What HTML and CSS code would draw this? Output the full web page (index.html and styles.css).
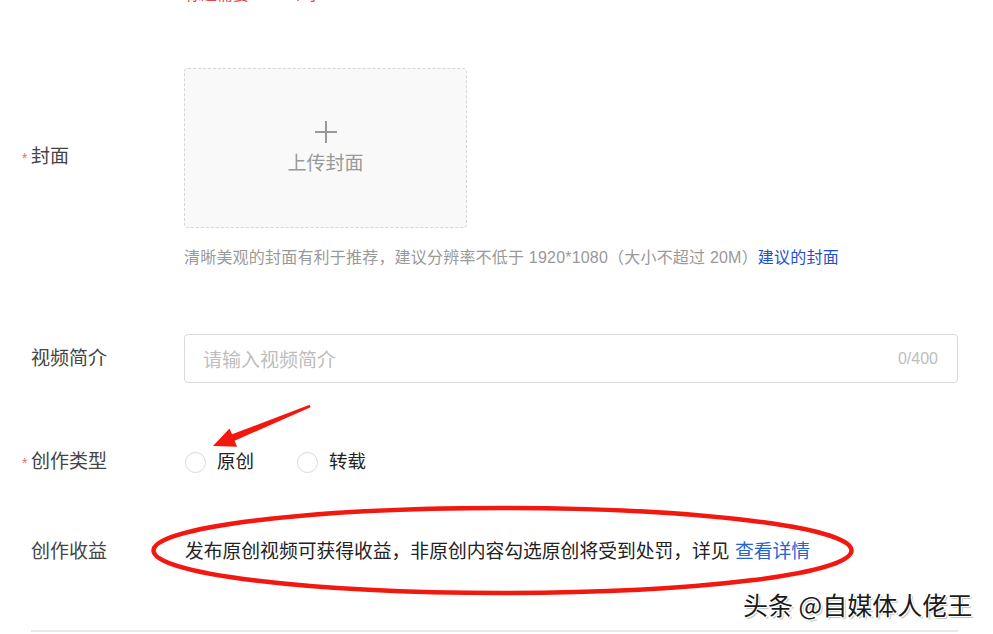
FILE: index.html
```html
<!DOCTYPE html>
<html lang="zh-CN">
<head>
<meta charset="utf-8">
<title>发布视频</title>
<link rel="stylesheet" href="styles.css">
</head>
<body>
<div class="page">
  <form class="form">
    <div class="row row-error">
      <div class="label"></div>
      <div class="content"><div class="error-text">标题需要 5-30 个字</div></div>
    </div>

    <div class="row row-cover">
      <div class="label label-top"><span class="req">*</span>封面</div>
      <div class="content">
        <div class="upload">
          <svg class="plus" width="24" height="24" viewBox="0 0 24 24"><path d="M12 1v22M1 12h22" stroke="#999" stroke-width="2" fill="none"/></svg>
          <span class="upload-text">上传封面</span>
        </div>
        <div class="hint">清晰美观的封面有利于推荐，建议分辨率不低于 1920*1080（大小不超过 20M）<a class="link">建议的封面</a></div>
      </div>
    </div>

    <div class="row row-intro">
      <div class="label"><span class="req blank"></span>视频简介</div>
      <div class="content">
        <div class="input">
          <span class="placeholder">请输入视频简介</span>
          <span class="count">0/400</span>
        </div>
      </div>
    </div>

    <div class="row row-type">
      <div class="label"><span class="req">*</span>创作类型</div>
      <div class="content radios">
        <label class="radio"><span class="circle"></span><span class="radio-text">原创</span></label>
        <label class="radio"><span class="circle"></span><span class="radio-text">转载</span></label>
      </div>
    </div>

    <div class="row row-income">
      <div class="label"><span class="req blank"></span>创作收益</div>
      <div class="content income">发布原创视频可获得收益，非原创内容勾选原创将受到处罚，详见 <a class="link link-dark">查看详情</a></div>
    </div>

    <div class="divider"></div>
  </form>

  <svg class="annot" width="993" height="634" viewBox="0 0 993 634">
    <polygon points="213,446 229.5,428.4 232,434.3 309.6,404.8 310.6,407.2 234.6,440.8 237.1,446.8" fill="#f2180f"/>
    <ellipse cx="502.5" cy="550.5" rx="349" ry="42.5" fill="none" stroke="#f2180f" stroke-width="4.5"/>
  </svg>

  <div class="watermark">头条 @自媒体人佬王</div>
</div>
</body>
</html>
```

FILE: styles.css
```css
* {
  box-sizing: border-box;
}

html, body {
  margin: 0;
  padding: 0;
  background: #fff;
}

body {
  font-family: "Liberation Sans", "Noto Sans CJK SC", sans-serif;
  color: #222;
  width: 993px;
  height: 634px;
  overflow: hidden;
}

.page {
  position: relative;
  width: 993px;
  height: 634px;
  overflow: hidden;
}

.form {
  padding-right: 35px;
  display: flex;
  flex-direction: column;
}

.row {
  display: flex;
  align-items: center;
}

.label {
  width: 184px;
  flex: none;
  padding-left: 22px;
  font-size: 19px;
  line-height: 26px;
  color: #444;
  display: flex;
  align-items: center;
}

.req {
  display: inline-block;
  width: 9px;
  font-size: 14px;
  color: #f46a6a;
  line-height: 14px;
  padding-top: 2px;
}

.req.blank {
  height: 1px;
}

.content {
  flex: 1;
  min-width: 0;
}

/* error line, mostly scrolled off top */
.row-error {
  margin-top: -13px;
  height: 16px;
  overflow: hidden;
}

.error-text {
  font-size: 16px;
  line-height: 16px;
  color: #f04040;
  padding-left: 1px;
}

/* cover */
.row-cover {
  margin-top: 65px;
  align-items: flex-start;
}

.label-top {
  margin-top: 76px;
}

.upload {
  width: 283px;
  height: 160px;
  border: 1px dashed #d6d6d6;
  border-radius: 4px;
  background: #f9f9f9;
  display: flex;
  flex-direction: column;
  align-items: center;
  padding-top: 51px;
}

.plus {
  display: block;
}

.upload-text {
  margin-top: 7px;
  font-size: 19px;
  line-height: 26px;
  color: #999;
}

.hint {
  margin-top: 19px;
  font-size: 16px;
  letter-spacing: 0.2px;
  line-height: 22px;
  color: #999;
  white-space: nowrap;
}

.link {
  color: #1f4fd0;
  text-decoration: none;
  cursor: pointer;
}

.link-dark {
  color: #2463d6;
}

/* intro */
.row-intro {
  margin-top: 65px;
}

.input {
  height: 49px;
  border: 1px solid #d9d9d9;
  border-radius: 4px;
  display: flex;
  align-items: center;
  justify-content: space-between;
  padding: 0 19px 0 18px;
}

.placeholder {
  font-size: 19px;
  color: #bdbdbd;
}

.count {
  font-size: 16px;
  color: #bdbdbd;
}

/* type */
.row-type {
  margin-top: 66px;
}

.radios {
  display: flex;
  align-items: center;
  gap: 42px;
}

.radio {
  display: flex;
  align-items: center;
  gap: 11px;
}

.circle {
  width: 21px;
  height: 21px;
  border: 1px solid #d9d9d9;
  border-radius: 50%;
  background: #fff;
  margin-left: 1px;
}

.radio-text {
  font-size: 18.5px;
  line-height: 26px;
  color: #222;
}

/* income */
.row-income {
  margin-top: 64px;
}

.income {
  font-size: 18.8px;
  line-height: 26px;
  color: #222;
  white-space: nowrap;
  padding-left: 1px;
}

.divider {
  margin-top: 65px;
  margin-left: 31px;
  height: 2px;
  background: #e8e8e8;
}

/* overlays */
.annot {
  position: absolute;
  left: 0;
  top: 0;
  pointer-events: none;
}

.watermark {
  position: absolute;
  left: 743px;
  top: 587px;
  font-family: "Noto Sans CJK SC", sans-serif;
  font-size: 25px;
  line-height: 34px;
  color: #1a1a1a;
  text-shadow: 1px 1px 0 #fff, -1px -1px 0 #fff, 1px -1px 0 #fff, -1px 1px 0 #fff, 2px 2px 1px rgba(0,0,0,0.25);
  white-space: nowrap;
}
```
